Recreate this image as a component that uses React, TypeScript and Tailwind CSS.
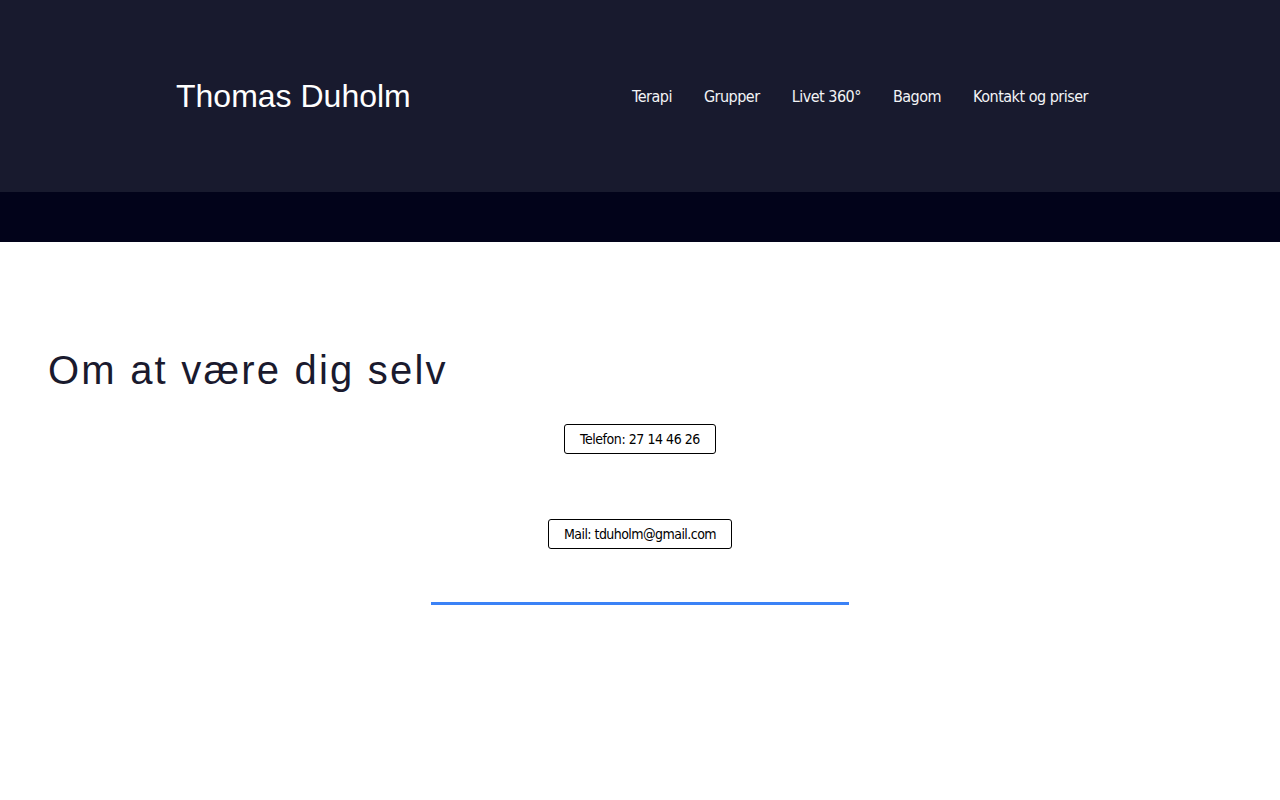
import React from 'react';

const navItems = ['Terapi', 'Grupper', 'Livet 360°', 'Bagom', 'Kontakt og priser'];

const narrow = { fontFamily: '"DejaVu Sans Condensed", "Liberation Sans", sans-serif' };

export default function App() {
  return (
    <div className="min-h-screen bg-white" style={{ fontFamily: '"Liberation Sans", Arial, sans-serif' }}>
      {/* header */}
      <header className="h-[192px] bg-[#181a2e] flex items-center justify-between pl-[176px] pr-[176px]">
        <a className="text-[32px] text-white leading-none">Thomas Duholm</a>
        <nav className="flex items-center pt-[2px]" style={narrow}>
          {navItems.map((item) => (
            <a key={item} className="px-4 text-[16px] tracking-[-0.5px] text-[#f3f4f6]">
              {item}
            </a>
          ))}
        </nav>
      </header>
      <div className="h-[50px] bg-[#02031a]" />

      {/* indhold */}
      <main className="pt-[104px] px-12">
        <h1 className="text-[40px] leading-[48px] tracking-[2.2px] text-[#1a1a2e]">Om at være dig selv</h1>

        <div className="flex flex-col items-center mt-[30px]" style={narrow}>
          <a className="h-[30px] px-[15px] flex items-center border border-black rounded-[3px] text-[14px] tracking-[-0.45px] text-black">
            Telefon: 27 14 46 26
          </a>
          <a className="mt-[65px] h-[30px] px-[15px] flex items-center border border-black rounded-[3px] text-[14px] tracking-[-0.55px] text-black">
            Mail: tduholm@gmail.com
          </a>
          <div className="mt-[53px] w-[418px] h-[3px] bg-[#3b82f6]" />
        </div>
      </main>
    </div>
  );
}
